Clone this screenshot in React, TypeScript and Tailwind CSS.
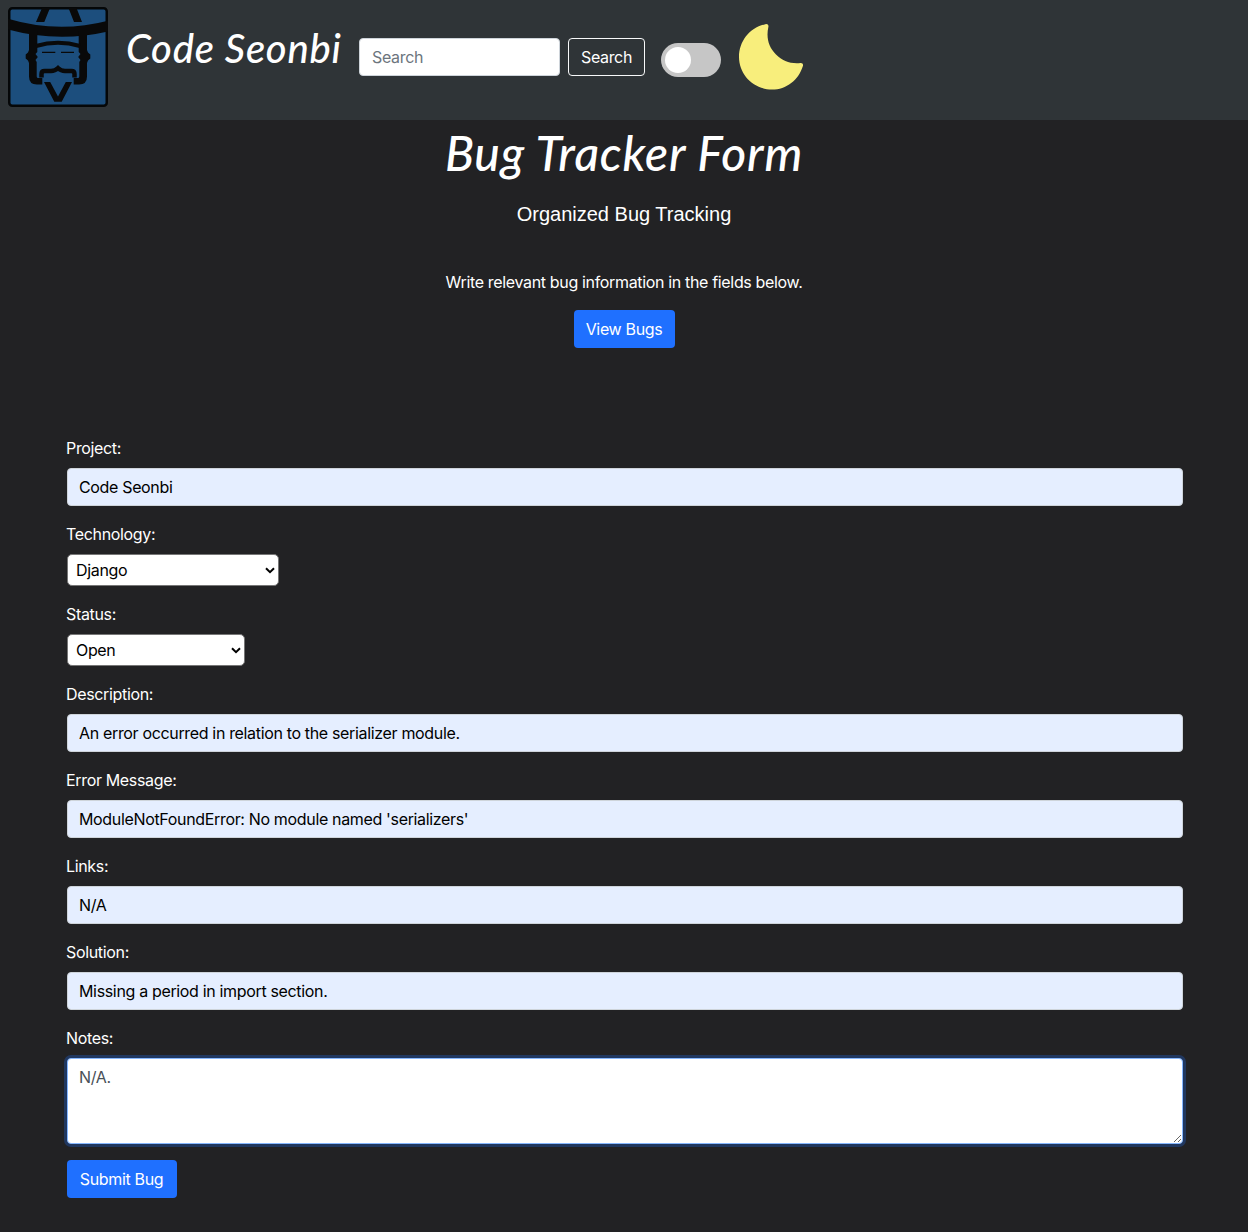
import React from 'react';

const control =
  'block h-[38px] w-full rounded-[4px] border border-[#ced4da] bg-[#e5eeff] px-[11.5px] text-base text-black outline-none';

function Logo() {
  return (
    <svg className="h-[100px] w-[100px] shrink-0" viewBox="0 0 100 100" fill="none" stroke="#090909">
      <rect x="1.25" y="1.25" width="97.5" height="97.5" rx="3" fill="#1c4e7d" stroke="#050708" strokeWidth="2.5" />
      <g fill="#090909" stroke="none">
        <path d="M34 1h8L36.300 15H28ZM60.500 1h8L74 15h-8Z" />
        <path d="M0 11.700Q50 26.700 100 13.700V24.500Q50 36 0 22.500Z" />
        <path d="M21 24h8.300v21L27.500 47l2.300 3-2.300 3 1.200 2v14.500q0 1.500 1.500 1.500h4.100v6.500H29q-8 0-8-8V56l-1-2.500-2.300-2v-4L20 45.500l1-2.500Z" />
        <path d="M79 24h-8.300v21l1.800 2-2.300 3 2.300 3-1.200 2v14.500q0 1.500-1.500 1.500h-4.100v6.500H71q8 0 8-8V56l1-2.500 2.300-2v-4L80 45.500l-1-2.500Z" />
        <path d="M36 75h6.200L50 89.500 57.800 75H64L53.700 94.700h-7.400Z" />
      </g>
      <path d="M28 39Q50 32.500 72 39" strokeWidth="4.200" />
      <path d="M34 45.300h13.300M53 45.300h13" strokeWidth="1.200" />
      <path
        d="M33.500 70.500V67q0-3 3-3H43q4 0 7-2.800 3 2.800 7 2.800h6.500q3 0 3 3v3.500"
        strokeWidth="4.500"
      />
    </svg>
  );
}

function Moon() {
  return (
    <svg className="ml-[18px] mt-[23px] h-[67px] w-[65px] shrink-0" viewBox="0 0 65 67">
      <path
        d="M26.500 1.200C28.200.7 29.800 2 29.400 3.700 27 15 29.500 24 37 31.500c6.500 6.500 14.500 9.500 24.500 8.500 1.800-.2 3 1.200 2.400 2.900C59.500 57 47.500 66.500 33 66.500 15 66.500 0 52 0 34 0 18 11 4.500 26.500 1.200Z"
        fill="#f8ee7c"
      />
    </svg>
  );
}

function Field({ label, value }: { label: string; value: string }) {
  return (
    <div className="mb-4">
      <label className="-ml-[0.5px] mb-2 block">{label}</label>
      <input className={control} defaultValue={value} />
    </div>
  );
}

function Select({ label, value, width }: { label: string; value: string; width: string }) {
  return (
    <div className="mb-4">
      <label className="-ml-[0.5px] mb-2 block">{label}</label>
      <div className={`flex h-8 items-center justify-between rounded-[5px] border border-[#767676] bg-white pl-[8.5px] pr-[3px] text-black ${width}`}>
        <span>{value}</span>
        <svg className="h-[7px] w-[10px]" viewBox="0 0 10 7" fill="none" stroke="black" strokeWidth="2">
          <path d="M1 1.200l4 4 4-4" />
        </svg>
      </div>
    </div>
  );
}

export default function App() {
  return (
    <div className="min-h-[1232px] bg-[#222224] font-['Inter',sans-serif] text-base tracking-[-0.34px] text-white">
      <nav className="flex h-[120px] items-start bg-[#2f3437] pl-2">
        <div className="pt-[7px]">
          <Logo />
        </div>
        <span className="ml-[18px] mt-[18px] w-[233px] whitespace-nowrap font-['Lato',cursive] text-[40px] font-medium italic leading-[60px] tracking-[0.8px]">
          Code Seonbi
        </span>
        <input
          className="mt-[38px] h-[38px] w-[201px] rounded-[4px] border border-[#ced4da] bg-white px-3 outline-none placeholder:text-[#6c757d]"
          placeholder="Search"
        />
        <button className="ml-2 mt-[38px] h-[38px] w-[77px] rounded-[4px] border border-[#f8f9fa]">Search</button>
        <div className="ml-4 mt-[43px] flex h-[34px] w-[60px] items-center rounded-full bg-[#c6c6c6] pl-1">
          <div className="size-[26px] rounded-full bg-white" />
        </div>
        <Moon />
      </nav>

      <header className="flex flex-col items-center">
        <h1 className="mt-1 whitespace-nowrap font-['Lato',cursive] text-[48px] font-medium italic leading-[58px] tracking-[0.8px]">
          Bug Tracker Form
        </h1>
        <h2 className="mt-5 font-['Liberation_Sans',sans-serif] text-xl leading-6 tracking-normal">Organized Bug Tracking</h2>
        <p className="mt-11 leading-6">Write relevant bug information in the fields below.</p>
        <button className="mt-4 h-[38px] w-[101px] rounded-[4px] bg-[#1f70ff]">View Bugs</button>
      </header>

      <form className="mt-[88px] pl-[66.5px] pr-[65px] leading-6">
        <Field label="Project:" value="Code Seonbi" />
        <Select label="Technology:" value="Django" width="w-[212px]" />
        <Select label="Status:" value="Open" width="w-[178px]" />
        <Field label="Description:" value="An error occurred in relation to the serializer module." />
        <Field label="Error Message:" value="ModuleNotFoundError: No module named 'serializers'" />
        <Field label="Links:" value="N/A" />
        <Field label="Solution:" value="Missing a period in import section." />
        <label className="-ml-[0.5px] mb-2 block">Notes:</label>
        <textarea
          className="block h-[86px] w-full rounded-[4px] border border-[#86b7fe] bg-white px-[11.5px] py-1.5 text-[#495057] shadow-[0_0_0_3px_#20375f] outline-none"
          defaultValue="N/A."
        />
        <button type="button" className="mt-4 block h-[38px] w-[110px] rounded-[4px] bg-[#1f70ff]">
          Submit Bug
        </button>
      </form>
    </div>
  );
}
